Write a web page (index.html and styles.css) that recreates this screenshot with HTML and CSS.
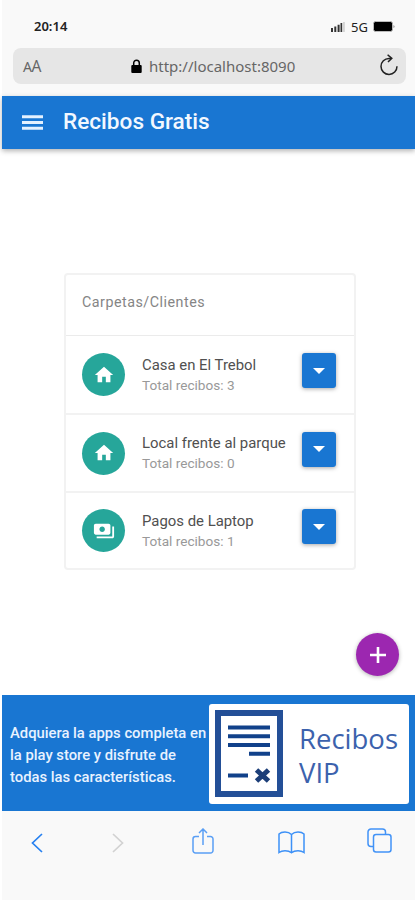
FILE: index.html
```html
<!DOCTYPE html>
<html lang="es">
<head>
  <meta charset="UTF-8" />
  <meta name="viewport" content="width=device-width, initial-scale=1.0"/>
  <title>Recibos Gratis</title>
  <link rel="stylesheet" href="styles.css">
</head>
<body>

  <div class="browser-top">
    <div class="status">
      <span class="time">20:14</span>
      <svg class="signal" width="14" height="10" viewBox="0 0 14 10">
        <path d="M0 6h2v4H0zM3.300 4.500h2V10h-2zM6.600 2.800h2V10h-2zM9.500 1h1.700v9H9.500z" fill="#333"/>
        <path d="M12.200 0h1.500v10h-1.500z" fill="#ccc"/>
      </svg>
      <span class="network">5G</span>
      <svg class="battery" width="22" height="11" viewBox="0 0 22 11">
        <rect x=".5" y=".5" width="19" height="10" rx="2" fill="#000" stroke="#bbb"/>
        <path d="M20.5 4v3q1-.5 1-1.5t-1-1.5z" fill="#888"/>
      </svg>
    </div>
    <div class="address">
      <span class="text-size"><small>A</small>A</span>
      <svg class="lock" width="11" height="14" viewBox="0 0 11 14">
        <rect x=".3" y="6" width="10.4" height="8" rx="1" fill="#000"/>
        <path d="M2.700 6.500V4a2.800 2.800 0 0 1 5.600 0v2.500" fill="none" stroke="#000" stroke-width="1.500"/>
      </svg>
      <span class="url">http://localhost:8090</span>
      <svg class="reload" width="20" height="22" viewBox="0 0 20 22">
        <path d="M12 4.400H10A8 8 0 1 0 18 12.300" fill="none" stroke="#222" stroke-width="1.500"/>
        <path d="M8.600.8 12.800 4.400 9 8" fill="none" stroke="#222" stroke-width="1.500"/>
      </svg>
    </div>
  </div>

  <header class="toolbar">
    <svg width="21" height="15" viewBox="0 0 21 15">
      <path d="M0 1.800h21M0 7.500h21M0 13.200h21" stroke="#e4f1ff" stroke-width="2.900"/>
    </svg>
    <h1>Recibos Gratis</h1>
  </header>

  <main>
    <div class="list">
      <div class="list-title">Carpetas/Clientes</div>
      <div class="item first">
        <div class="avatar">
          <svg width="22" height="22" viewBox="0 0 24 24"><path d="M10 20v-6h4v6h5v-8h3L12 3 2 12h3v8z" fill="#fff"/></svg>
        </div>
        <div class="info">
          <div class="name">Casa en El Trebol</div>
          <div class="total">Total recibos: 3</div>
        </div>
        <button><svg width="12" height="6" viewBox="0 0 12 6"><path d="M0 0h12L6 6z" fill="#fff"/></svg></button>
      </div>
      <div class="item middle">
        <div class="avatar">
          <svg width="22" height="22" viewBox="0 0 24 24"><path d="M10 20v-6h4v6h5v-8h3L12 3 2 12h3v8z" fill="#fff"/></svg>
        </div>
        <div class="info">
          <div class="name">Local frente al parque</div>
          <div class="total">Total recibos: 0</div>
        </div>
        <button><svg width="12" height="6" viewBox="0 0 12 6"><path d="M0 0h12L6 6z" fill="#fff"/></svg></button>
      </div>
      <div class="item">
        <div class="avatar">
          <svg width="22" height="22" viewBox="0 0 24 24"><path d="M19 14V6c0-1.100-.9-2-2-2H3c-1.100 0-2 .9-2 2v8c0 1.100.9 2 2 2h14c1.100 0 2-.9 2-2zm-9-1c-1.660 0-3-1.340-3-3s1.340-3 3-3 3 1.340 3 3-1.340 3-3 3zm13-6v11c0 1.100-.9 2-2 2H4v-2h17V7h2z" fill="#fff"/></svg>
        </div>
        <div class="info">
          <div class="name">Pagos de Laptop</div>
          <div class="total">Total recibos: 1</div>
        </div>
        <button><svg width="12" height="6" viewBox="0 0 12 6"><path d="M0 0h12L6 6z" fill="#fff"/></svg></button>
      </div>
    </div>
    <div class="add">
      <svg width="16" height="16" viewBox="0 0 16 16"><path d="M8 0v16M0 8h16" stroke="#fff" stroke-width="2.600"/></svg>
    </div>
  </main>

  <footer class="banner">
    <p>Adquiera la apps completa en<br>la play store y disfrute de<br>todas las características.</p>
    <div class="vip">
      <svg width="68" height="87" viewBox="0 0 68 87">
        <rect x="3" y="3" width="62" height="81" fill="#fff" stroke="#234f97" stroke-width="6"/>
        <path d="M13 17.500h42M13 26.300h42M13 35h42M34 43.700h21M13 65.500h20" stroke="#11418a" stroke-width="4"/>
        <path d="M41.500 60l12 11M53.500 60l-12 11" stroke="#1c3e78" stroke-width="5"/>
      </svg>
      <div class="vip-text">Recibos<br>VIP</div>
    </div>
  </footer>

  <nav class="browser-nav">
    <svg class="back" width="12" height="20" viewBox="0 0 12 20"><path d="M11 1 1.500 10 11 19" fill="none" stroke="#2680f0" stroke-width="1.700"/></svg>
    <svg class="forward" width="12" height="20" viewBox="0 0 12 20"><path d="M1 1l9.500 9L1 19" fill="none" stroke="#d2d2d2" stroke-width="1.700"/></svg>
    <svg class="share" width="22" height="26" viewBox="0 0 22 26" fill="none" stroke="#5a9ff5" stroke-width="1.500">
      <path d="M7 8.500H3.500a2.500 2.500 0 0 0-2.500 2.500v11.500A2.500 2.500 0 0 0 3.500 25h15a2.500 2.500 0 0 0 2.500-2.500V11a2.500 2.500 0 0 0-2.500-2.500H15M11 17V1.500M7 5l4-4 4 4"/>
    </svg>
    <svg class="book" width="27" height="23" viewBox="0 0 27 23" fill="none" stroke="#3d91f7" stroke-width="1.500">
      <path d="M13.500 3.500C11.500 1.500 9.500 1 7 1S2.500 1.500 1 3v18.500C3 20 5 19.700 7 19.700s4.500.3 6.500 2c2-1.700 4.500-2 6.500-2s4 .3 6 1.800V3c-1.500-1.500-3.500-2-6-2s-4.500.5-6.500 2.500zv18"/>
    </svg>
    <svg class="tabs" width="25" height="25" viewBox="0 0 25 25" fill="none" stroke="#4293f7" stroke-width="1.500">
      <rect x="6.500" y="6.500" width="17.500" height="17.500" rx="2.500"/>
      <path d="M6.500 18.500H4A3 3 0 0 1 1 15.500V4a3 3 0 0 1 3-3h11.500a3 3 0 0 1 3 3v2.500"/>
    </svg>
  </nav>

</body>
</html>
```
FILE: styles.css
```css
* {
  box-sizing: border-box;
}
body {
  margin: 0;
  padding-left: 2px;
  height: 900px;
  display: flex;
  flex-direction: column;
  font-family: Roboto, sans-serif;
  background: #fff;
  overflow: hidden;
}
svg {
  display: block;
  flex: none;
}
.browser-top {
  height: 96px;
  background: #f9f9f9;
}
.status {
  height: 48px;
  padding: 5px 20px 0 32px;
  display: flex;
  align-items: center;
  font-family: "Noto Sans", sans-serif;
  font-size: 13px;
  color: #222;
}
.time {
  padding-bottom: 2px;
  font-weight: 600;
  margin-right: auto;
}
.network {
  margin: 0 5px 0 6px;
}
.address {
  height: 36px;
  margin: 0 9px 0 11px;
  padding: 0 7px 0 10px;
  display: flex;
  align-items: center;
  background: #e6e6e6;
  border-radius: 8px;
  font-family: "Noto Sans", sans-serif;
  font-size: 15px;
  color: #666;
}
.text-size {
  width: 18px;
  font-size: 15.5px;
  letter-spacing: -0.5px;
}
.text-size small {
  font-size: 14px;
}
.lock {
  margin-left: 90px;
}
.url {
  margin-left: 7px;
  white-space: nowrap;
}
.reload {
  margin: 0 0 3px auto;
}
.toolbar {
  height: 53px;
  padding: 0 20px;
  display: flex;
  align-items: center;
  gap: 20px;
  background: #1976d2;
  box-shadow: 0 2px 5px rgba(0, 0, 0, 0.3);
}
h1 {
  margin: 0;
  padding-bottom: 2px;
  font-size: 22.6px;
  font-weight: 500;
  color: #f2f8ff;
}
main {
  height: 546px;
  padding: 124px 16px 0 62px;
  display: flex;
  flex-direction: column;
}
.list {
  width: 292px;
  border: 2px solid #f2f2f2;
  border-radius: 4px;
}
.list-title {
  height: 60px;
  padding: 17px 16px;
  font-size: 14.3px;
  line-height: 20px;
  letter-spacing: 0.5px;
  color: #858585;
}
.item {
  height: 77px;
  padding: 0 18px 0 16px;
  display: flex;
  align-items: center;
  border-top: 2px solid #f2f2f2;
}
.item.first {
  height: 78px;
  border-top: 1px solid #ebebeb;
}
.item.middle {
  height: 78px;
}
.avatar {
  width: 43px;
  height: 43px;
  margin-right: 17px;
  border-radius: 50%;
  background: #26a69a;
  display: flex;
  align-items: center;
  justify-content: center;
}
.info {
  white-space: nowrap;
}
.name {
  font-size: 14.9px;
  line-height: 20px;
  color: #505050;
}
.total {
  font-size: 13.6px;
  line-height: 20px;
  color: #999;
}
button {
  width: 34px;
  height: 35px;
  margin: 0 0 8px auto;
  padding: 0;
  border: none;
  border-radius: 3px;
  background: #1976d2;
  box-shadow: 0 1px 4px rgba(0, 0, 0, 0.35);
  display: flex;
  align-items: center;
  justify-content: center;
}
.add {
  width: 43px;
  height: 43px;
  margin: auto 0 19px auto;
  border-radius: 50%;
  background: #9c27b0;
  box-shadow: 0 1px 4px rgba(0, 0, 0, 0.3);
  display: flex;
  align-items: center;
  justify-content: center;
}
.banner {
  height: 116px;
  padding: 1px 6px 0 8px;
  display: flex;
  align-items: center;
  justify-content: space-between;
  background: #1976d2;
}
.banner p {
  margin: 2px 0 0;
  font-size: 14.8px;
  font-weight: 500;
  line-height: 22px;
  white-space: nowrap;
  color: #e8f2ff;
}
.vip {
  width: 200px;
  height: 100px;
  padding: 0 6px;
  display: flex;
  align-items: center;
  background: #fff;
  border-radius: 3px;
}
.vip-text {
  margin: 4px 0 0 16px;
  font-family: "Open Sans", sans-serif;
  font-size: 27.5px;
  line-height: 34px;
  color: #3c62ad;
}
.browser-nav {
  height: 89px;
  padding: 17px 0 0 29px;
  display: flex;
  align-items: flex-start;
  background: #f9f9f9;
}
.back,
.forward {
  margin-top: 5px;
}
.forward {
  margin-left: 69px;
}
.share {
  margin-left: 68px;
}
.book {
  margin: 3px 62px 0 64px;
}
```
